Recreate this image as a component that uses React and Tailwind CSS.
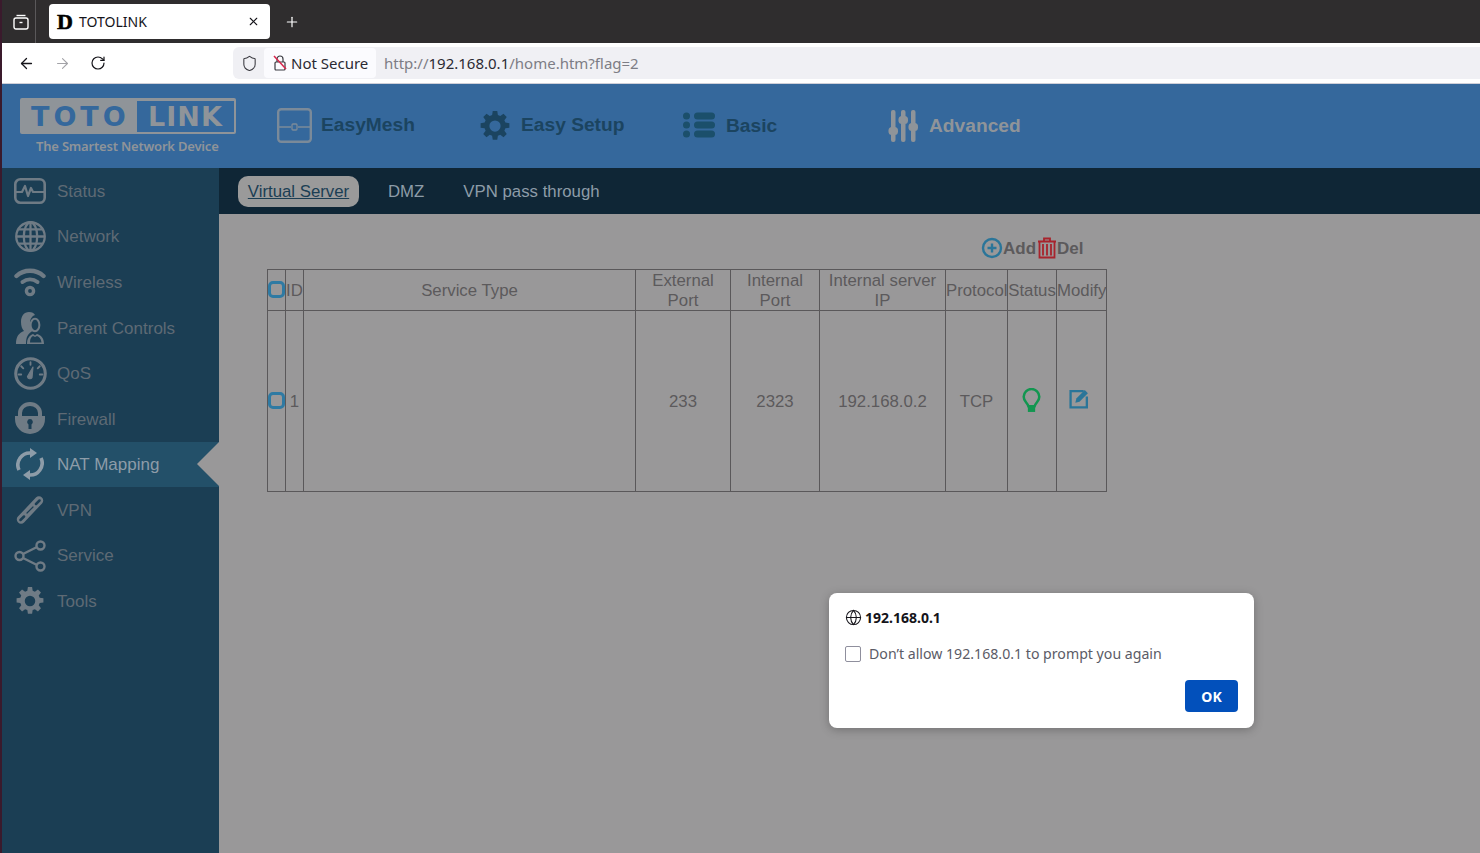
import { Plus, X, ArrowLeft, ArrowRight, RotateCw, Shield, Globe } from 'lucide-react';

const ui = 'font-["Noto_Sans","Open_Sans",sans-serif]';
const arial = 'font-["Liberation_Sans",Arial,sans-serif]';

// ── Sidebar icons ───────────────────────────────────────────────────────────
const StatusIcon = () => (
  <svg width="32" height="26" viewBox="0 0 32 26" fill="none" stroke="currentColor" strokeWidth="2.600" strokeLinecap="round" strokeLinejoin="round">
    <rect x="1.300" y="1.300" width="29.400" height="23.400" rx="5" />
    <path d="M2 14h6l3-6 3 10 3-8 2 4h11" strokeWidth="2.200" />
  </svg>
);
const NetworkIcon = () => (
  <svg width="31" height="31" viewBox="0 0 30 30" fill="none" stroke="currentColor" strokeWidth="2.200">
    <circle cx="15" cy="15" r="13.800" />
    <ellipse cx="15" cy="15" rx="6.500" ry="13.800" />
    <path d="M15 1v28M1 15h28M3.500 8h23M3.500 22h23" />
  </svg>
);
const WirelessIcon = () => (
  <svg width="32" height="30" viewBox="0 0 32 30" fill="none" stroke="currentColor" strokeLinecap="round">
    <path d="M2.500 9C10 2 22 2 29.500 9" strokeWidth="4.400" />
    <path d="M8.500 15c4.500-3.500 10.500-3.500 15 0" strokeWidth="4" />
    <circle cx="16" cy="24" r="3.600" strokeWidth="3.400" />
  </svg>
);
const ParentIcon = () => (
  <svg width="30" height="34" viewBox="0 0 30 34" fill="none">
    <path fill="currentColor" d="M1 33c0-8 3-11 8-13-2-2-3-5-3-9 0-6 3-10 8-10 3 0 5 1 6 3-3 1-5 4-5 8 0 3 1 6 3 8-5 2-7 6-7 13z" />
    <ellipse cx="20" cy="14" rx="4.400" ry="6.200" stroke="currentColor" strokeWidth="2" />
    <path fill="currentColor" d="M12 33c0-6 3-9 6-10l2 1.500 2-1.500c4 1 7 4 7 10z" />
    <path fill="#1b3e54" d="M15 31.500c0-4 1.500-6 3-6.500l2 1 2-1c2 .5 4 2.500 4.500 6.500z" />
  </svg>
);
const QosIcon = () => (
  <svg width="33" height="33" viewBox="0 0 32 32" fill="none" stroke="currentColor" strokeLinecap="round">
    <circle cx="16" cy="16" r="14.300" strokeWidth="3" />
    <path d="M16 5v2.500M7 9l2 2M25 9l-2 2M4.500 17H7M27.500 17H25" strokeWidth="1.800" />
    <path d="M13 19l5.500-9.500-1 10.500a2.500 2.500 0 0 1-4.500-1z" fill="currentColor" strokeWidth="1" />
  </svg>
);
const FirewallIcon = () => (
  <svg width="32" height="33" viewBox="0 0 32 33" fill="none">
    <path d="M6 14V11a10 9 0 0 1 20 0v3" stroke="currentColor" strokeWidth="4" />
    <path fill="currentColor" fillRule="evenodd" d="M1 14h30v3a15 15 0 0 1-30 0zM16 17a3 3 0 0 0-1.500 5.500V27h3v-4.500A3 3 0 0 0 16 17z" />
  </svg>
);
const NatIcon = () => (
  <svg width="28" height="32" viewBox="0 0 28 32" fill="none" stroke="currentColor" strokeWidth="3.600">
    <path d="M3 22A12 12 0 0 1 15 5" />
    <path d="M25 10A12 12 0 0 1 13 27" />
    <path d="M14 0l7 5-7 5z" fill="currentColor" stroke="none" />
    <path d="M14 22l-7 5 7 5z" fill="currentColor" stroke="none" />
  </svg>
);
const VpnIcon = () => (
  <svg width="30" height="30" viewBox="0 0 30 30" fill="none" stroke="currentColor" strokeLinecap="round">
    <path d="M6 24.500L24 5.500" strokeWidth="8.500" />
    <path d="M5.500 25l3.500-3.500M21 9l3.500-3.500" stroke="#1b3e54" strokeWidth="2.500" />
    <path d="M12 18l6-6" stroke="#1b3e54" strokeWidth="1.200" />
  </svg>
);
const ServiceIcon = () => (
  <svg width="32" height="32" viewBox="0 0 32 32" fill="none" stroke="currentColor" strokeWidth="2.400">
    <circle cx="5.500" cy="16" r="4" />
    <circle cx="26.500" cy="5.500" r="4" />
    <circle cx="26.500" cy="26.500" r="4" />
    <path d="M9 14l14-7M9 18l14 7" />
  </svg>
);
const ToolsIcon = () => (
  <svg width="28" height="28" viewBox="0 0 24 24" fill="currentColor">
    <path fillRule="evenodd" d="M13.800 0h-3.600l-.5 3.200-1.900.8L5.200 2.100 2.600 4.700l1.900 2.600-.8 1.900-3.200.5v3.600l3.200.5.800 1.900-1.900 2.600 2.600 2.600 2.600-1.900 1.900.8.500 3.200h3.600l.5-3.200 1.900-.8 2.600 1.900 2.600-2.600-1.900-2.600.8-1.900 3.200-.5v-3.600l-3.200-.5-.8-1.900 1.900-2.600-2.600-2.600-2.600 1.900-1.900-.8zM12 7.500a4.500 4.500 0 1 1 0 9 4.500 4.500 0 0 1 0-9z" />
  </svg>
);

const menu = [
  { label: 'Status', Icon: StatusIcon },
  { label: 'Network', Icon: NetworkIcon },
  { label: 'Wireless', Icon: WirelessIcon },
  { label: 'Parent Controls', Icon: ParentIcon },
  { label: 'QoS', Icon: QosIcon },
  { label: 'Firewall', Icon: FirewallIcon },
  { label: 'NAT Mapping', Icon: NatIcon, active: true },
  { label: 'VPN', Icon: VpnIcon },
  { label: 'Service', Icon: ServiceIcon },
  { label: 'Tools', Icon: ToolsIcon },
];

// ── Browser chrome ──────────────────────────────────────────────────────────
function TabStrip() {
  return (
    <div className="flex h-[43px] items-center bg-[#2f2d2e] text-white">
      <div className="flex h-full w-[34px] items-center justify-center border-r border-[#5a585a] pl-[6px] pr-[2px]">
        <svg width="16" height="16" viewBox="0 0 16 16" fill="none" stroke="currentColor" strokeWidth="1.400">
          <path d="M3.500 1.500h9" />
          <rect x="1" y="4" width="14" height="11" rx="2" />
          <path d="M6.500 8.500h3" />
        </svg>
      </div>
      <div className={`ml-[13px] flex h-[35px] w-[221px] items-center rounded-[4px] bg-white pl-[8px] pr-[10px] text-[#15141a] ${ui}`}>
        <span className='w-[22px] font-["Liberation_Serif",serif] text-[22px] font-bold leading-none text-black [-webkit-text-stroke:0.6px_black]'>D</span>
        <span className="flex-1 text-[14px]">TOTOLINK</span>
        <X size={13} strokeWidth={2} />
      </div>
      <Plus size={16} strokeWidth={1.800} className="ml-[14px]" />
    </div>
  );
}

function UrlBar() {
  return (
    <div className="flex h-[41px] items-center border-b border-[#cfcfd8] bg-white text-[#15141a]">
      <ArrowLeft size={17} strokeWidth={1.800} className="ml-[16px]" />
      <ArrowRight size={17} strokeWidth={1.500} className="ml-[19px] text-[#a3a3a8]" />
      <RotateCw size={16} strokeWidth={1.800} className="ml-[19px]" />
      <div className={`ml-[127px] flex h-[32px] flex-1 items-center rounded-l-[6px] bg-[#f0f0f4] pl-[8px] ${ui}`}>
        <Shield size={17} strokeWidth={1.500} className="text-[#3a3a40]" />
        <div className="ml-[6px] flex h-[30px] w-[112px] items-center rounded-[4px] bg-[#fbfbfe] pl-[9px]">
          <svg width="14" height="16" viewBox="0 0 14 16" fill="none" stroke="#3a3a40" strokeWidth="1.200">
            <rect x="2" y="7" width="10" height="8" rx="1" />
            <path d="M4 7V4a3 3 0 0 1 6 0v3" />
            <path d="M1 1l12 13" stroke="#d7264c" strokeWidth="1.500" />
          </svg>
          <span className="ml-[4px] text-[15px] text-[#2b2a33]">Not Secure</span>
        </div>
        <span className="ml-[8px] text-[15px] text-[#7d7d85]">
          http://<span className="text-[#2b2a33]">192.168.0.1</span>/home.htm?flag=2
        </span>
      </div>
    </div>
  );
}

// ── Router page header ──────────────────────────────────────────────────────
function Logo() {
  return (
    <div className="w-[216px] text-[#8f9499]">
      <div className='flex h-[36px] items-center rounded-[2px] bg-[#8f9499] pl-[11px] pr-[2px] font-["DejaVu_Sans",sans-serif]'>
        <span className="w-[106px] text-[27px] font-bold leading-none tracking-[4px] text-[#35689c]">TOTO</span>
        <span className="flex h-[31px] flex-1 items-center justify-center bg-[#35689c] text-[27px] font-bold leading-none tracking-[1px] text-[#8f9499]">LINK</span>
      </div>
      <div className={`mt-[3px] pl-[16px] text-[13px] font-semibold leading-[18px] tracking-[-0.2px] ${ui}`}>The Smartest Network Device</div>
    </div>
  );
}

function NavItem({ icon, label, grey, className }) {
  return (
    <div className={`flex items-center ${className}`}>
      {icon}
      <span className={`text-[19.200px] font-bold ${grey ? 'mt-[1px] text-[#8f9499]' : 'text-[#1b4460]'}`}>{label}</span>
    </div>
  );
}

function Header() {
  return (
    <div className={`flex h-[84px] items-center bg-[#35689c] pl-[18px] ${arial}`}>
      <div className="mt-[1px]"><Logo /></div>
      <div className="mt-[-1px] flex items-center">
        <NavItem
          className="ml-[41px] w-[203px]"
          label="EasyMesh"
          icon={
            <svg width="35" height="35" viewBox="0 0 35 35" fill="none" stroke="#7b8a99" strokeWidth="2.400" className="mr-[9px]">
              <rect x="1.200" y="1.200" width="32.600" height="32.600" rx="3" />
              <path d="M1 19h13M21 19h13" strokeWidth="1.300" />
              <rect x="15" y="16" width="5" height="6" rx="1" strokeWidth="1.300" />
            </svg>
          }
        />
        <NavItem
          className="w-[203px]"
          label="Easy Setup"
          icon={
            <svg width="30" height="30" viewBox="0 0 24 24" fill="#1b4460" className="mr-[11px]">
              <path fillRule="evenodd" d="M13.800 0h-3.600l-.5 3.200-1.900.8L5.200 2.100 2.600 4.700l1.900 2.600-.8 1.900-3.200.5v3.600l3.200.5.800 1.900-1.900 2.600 2.600 2.600 2.600-1.900 1.900.8.500 3.200h3.600l.5-3.200 1.900-.8 2.600 1.900 2.600-2.600-1.900-2.600.8-1.900 3.200-.5v-3.600l-3.200-.5-.8-1.900 1.900-2.600-2.600-2.600-2.600 1.900-1.900-.8zM12 7.500a4.500 4.500 0 1 1 0 9 4.500 4.500 0 0 1 0-9z" />
            </svg>
          }
        />
        <NavItem
          className="w-[205px] [&>span]:mt-[1px]"
          label="Basic"
          icon={
            <svg width="32" height="26" viewBox="0 0 32 26" fill="#1b4f6b" className="mr-[11px]">
              <circle cx="3.500" cy="4" r="3.500" /><circle cx="3.500" cy="13" r="3.500" /><circle cx="3.500" cy="22" r="3.500" />
              <rect x="11" y="0.500" width="21" height="7" rx="3.500" /><rect x="11" y="9.500" width="21" height="7" rx="3.500" /><rect x="11" y="18.500" width="21" height="7" rx="3.500" />
            </svg>
          }
        />
        <NavItem
          grey
          label="Advanced"
          icon={
            <svg width="30" height="32" viewBox="0 0 30 32" fill="#8f9499" className="mr-[11px]">
              <rect x="3" y="0" width="4.500" height="32" rx="2" /><rect x="13" y="0" width="4.500" height="32" rx="2" /><rect x="23" y="0" width="4.500" height="32" rx="2" />
              <rect x="0.500" y="17" width="9.500" height="8" rx="3.500" /><rect x="10.500" y="6" width="9.500" height="8" rx="3.500" /><rect x="20.500" y="13" width="9.500" height="8" rx="3.500" />
            </svg>
          }
        />
      </div>
    </div>
  );
}

function Sidebar() {
  return (
    <div className={`w-[217px] shrink-0 bg-[#1b3e54] ${arial}`}>
      {menu.map(({ label, Icon, active }) => (
        <div key={label} className={`relative flex h-[45.600px] items-center text-[17px] ${active ? 'bg-[#235069] text-[#8d9ca8]' : 'text-[#5e6a74]'}`}>
          <div className={`flex w-[55px] items-center justify-center pl-[1px] ${active ? 'text-[#8d9ca8]' : 'text-[#6f7b85]'}`}>
            <Icon />
          </div>
          <span className="pt-[1.400px]">{label}</span>
          {active && (
            <div className="absolute right-0 top-0 h-0 w-0 border-y-[22.800px] border-r-[22px] border-y-transparent border-r-[#999899]" />
          )}
        </div>
      ))}
    </div>
  );
}

// ── Virtual server panel ────────────────────────────────────────────────────
function TableCheck({ body }) {
  return <div className={`mx-auto h-[17px] w-[17px] rounded-[5px] border-[3px] border-[#2f7aa3] ${body ? 'mb-[3px]' : 'mb-[1px]'}`} />;
}

function HeadLabel({ children }) {
  return <span className="block translate-y-[1px]">{children}</span>;
}

function Panel() {
  const th = 'border border-[#5a585a] p-0 font-normal leading-[20px]';
  const td = 'border border-[#5a585a] p-0 pt-[2px] text-center';
  return (
    <div className={`flex-1 bg-[#999899] text-[#5c5a5c] ${arial}`}>
      <div className="flex h-[46px] items-center bg-[#0f2636] pl-[19px] text-[16.800px] text-[#8d9ca8]">
        <span className="flex h-[31px] w-[121px] items-center justify-center rounded-[10px] bg-[#9a9a9a] pt-[2px] text-[#1b3e54] underline">Virtual Server</span>
        <span className="ml-[29px] pt-[2px]">DMZ</span>
        <span className="ml-[39px] pt-[2px]">VPN pass through</span>
      </div>
      <div className="pl-[48px] pt-[23px]">
        <div className="flex h-[22px] w-[840px] items-center pl-[714px] text-[17px] font-bold">
          <svg width="22" height="22" viewBox="0 0 22 22" fill="none" stroke="#2a7599" strokeWidth="2.400">
            <circle cx="11" cy="11" r="9" />
            <path d="M11 6.500v9M6.500 11h9" />
          </svg>
          <span className="pt-[1px]">Add</span>
          <svg width="20" height="22" viewBox="0 0 20 22" fill="none" stroke="#a8232c" strokeWidth="1.800" className="ml-[1px]">
            <path d="M1 4.500h18M7 4.500V1.500h6v3" />
            <path d="M2.500 4.500v16h15v-16M6 7v11.500M10 7v11.500M14 7v11.500" />
          </svg>
          <span className="pt-[1px]">Del</span>
        </div>
        <table className="mt-[10px] w-[840px] table-fixed border-collapse text-[16.800px]">
          <colgroup>
            <col className="w-[18px]" /><col className="w-[18px]" /><col className="w-[332px]" /><col className="w-[95px]" />
            <col className="w-[89px]" /><col className="w-[126px]" /><col className="w-[62px]" /><col className="w-[49px]" /><col className="w-[50px]" />
          </colgroup>
          <thead>
            <tr className="h-[41px]">
              <th className={th}><TableCheck /></th>
              <th className={th}><HeadLabel>ID</HeadLabel></th>
              <th className={th}><HeadLabel>Service Type</HeadLabel></th>
              <th className={th}><HeadLabel>External<br />Port</HeadLabel></th>
              <th className={th}><HeadLabel>Internal<br />Port</HeadLabel></th>
              <th className={th}><HeadLabel>Internal server<br />IP</HeadLabel></th>
              <th className={th}><HeadLabel>Protocol</HeadLabel></th>
              <th className={th}><HeadLabel>Status</HeadLabel></th>
              <th className={th}><HeadLabel>Modify</HeadLabel></th>
            </tr>
          </thead>
          <tbody>
            <tr className="h-[181px]">
              <td className={td}><TableCheck body /></td>
              <td className={td}>1</td>
              <td className={td}></td>
              <td className={td}>233</td>
              <td className={td}>2323</td>
              <td className={td}>192.168.0.2</td>
              <td className={td}>TCP</td>
              <td className={td}>
                <svg width="19" height="25" viewBox="0 0 18 24" fill="none" className="mx-auto mb-[4px] -translate-x-[1px]">
                  <path d="M6 17.500C5 14 1.500 13 1.500 8.500a7.500 7.500 0 0 1 15 0c0 4.500-3.500 5.500-4.500 9z" stroke="#129650" strokeWidth="2.400" />
                  <path d="M5.500 17.500h7V23h-7z" fill="#129650" />
                </svg>
              </td>
              <td className={td}>
                <svg width="21" height="21" viewBox="0 0 20 20" fill="none" className="mx-auto mb-[7px] -translate-x-[2px]">
                  <path d="M14 3H1.500v15.500H17V8" stroke="#2a7599" strokeWidth="2.200" />
                  <path d="M6 14l1-4 8-8 3 3-8 8z" fill="#2a7599" />
                </svg>
              </td>
            </tr>
          </tbody>
        </table>
      </div>
    </div>
  );
}

function PromptDialog() {
  return (
    <div className={`absolute left-[829px] top-[593px] flex h-[135px] w-[425px] flex-col rounded-[8px] bg-white px-[16px] shadow-[0_2px_10px_rgba(0,0,0,0.25)] ${ui}`}>
      <div className="mt-[14px] flex items-center text-[14px] font-bold text-[#15141a]">
        <Globe size={17} strokeWidth={1.500} className="mr-[3px]" />
        192.168.0.1
      </div>
      <div className="mt-[15px] flex items-center text-[14.150px] text-[#5b5b66]">
        <div className="mr-[8px] h-[16px] w-[16px] rounded-[2px] border border-[#8f8f9d]" />
        Don’t allow 192.168.0.1 to prompt you again
      </div>
      <div className="mt-[16px] flex justify-end">
        <button className="h-[32px] w-[53px] rounded-[4px] bg-[#0250bb] text-[14px] font-bold text-white">OK</button>
      </div>
    </div>
  );
}

export default function App() {
  return (
    <div className="relative flex h-[853px] w-[1480px] overflow-hidden bg-[#999899]">
      <div className="w-[2px] shrink-0 bg-[#3a1a2c]" />
      <div className="flex min-w-0 flex-1 flex-col">
        <TabStrip />
        <UrlBar />
        <Header />
        <div className="flex min-h-0 flex-1">
          <Sidebar />
          <Panel />
        </div>
      </div>
      <PromptDialog />
    </div>
  );
}
